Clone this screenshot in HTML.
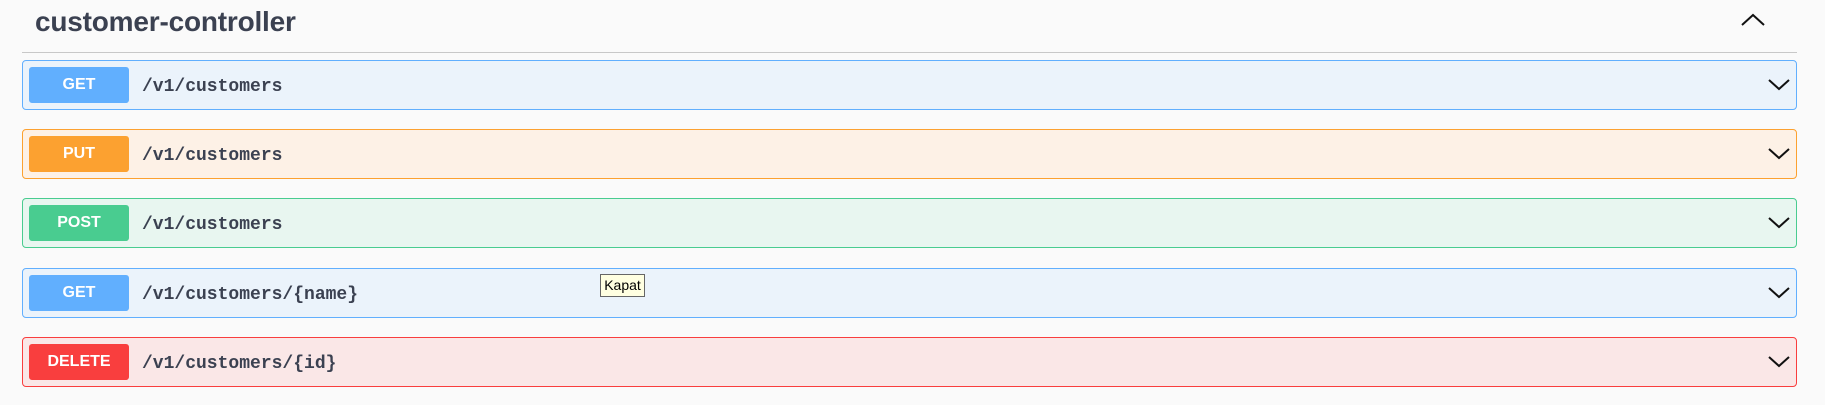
<!DOCTYPE html>
<html><head><meta charset="utf-8"><style>
html,body{margin:0;padding:0;background:#fafafa;width:1825px;height:405px;overflow:hidden;}
body{position:relative;font-family:"Liberation Sans",Arial,sans-serif;}
.title{position:absolute;left:35px;top:6px;font-size:28px;font-weight:bold;color:#3b4151;letter-spacing:-0.2px;}
.hr{position:absolute;left:22px;top:52px;width:1775px;height:1px;background:#c8c8c8;}
.blk{position:absolute;left:22px;width:1773px;height:48px;border:1px solid;border-radius:4px;}
.btn{position:absolute;left:6px;top:6px;width:100px;height:36px;border-radius:3px;color:#fff;font-weight:bold;font-size:16px;text-align:center;line-height:36px;}
.path{position:absolute;left:119px;top:14px;font-family:"Liberation Mono",monospace;font-weight:bold;font-size:18px;color:#3b4151;line-height:24px;}
.chev{position:absolute;left:1745px;top:18px;}
.get{background:#ebf3fb;border-color:#61affe;}.get .btn{background:#61affe;}
.put{background:#fdf1e6;border-color:#fca130;}.put .btn{background:#fca130;}
.post{background:#e8f6f0;border-color:#49cc90;}.post .btn{background:#49cc90;}
.del{background:#fae7e7;border-color:#f93e3e;}.del .btn{background:#f93e3e;}
.tip{position:absolute;left:600px;top:274px;width:43px;height:21px;border:1px solid #666;background:#ffffe1;font-size:14px;line-height:21px;text-align:center;color:#000;}
</style></head><body>
<div class="title">customer-controller</div>
<svg style="position:absolute;left:1741px;top:13px" width="24" height="14"><path d="M1 12 L12 2 L23 12" fill="none" stroke="#111" stroke-width="2"/></svg>
<div class="hr"></div>

<div class="blk get" style="top:60px"><div class="btn">GET</div><div class="path">/v1/customers</div><svg class="chev" width="22" height="12"><path d="M1 1 L11 10 L21 1" fill="none" stroke="#111" stroke-width="2"/></svg></div>
<div class="blk put" style="top:129px"><div class="btn">PUT</div><div class="path">/v1/customers</div><svg class="chev" width="22" height="12"><path d="M1 1 L11 10 L21 1" fill="none" stroke="#111" stroke-width="2"/></svg></div>
<div class="blk post" style="top:198px"><div class="btn">POST</div><div class="path">/v1/customers</div><svg class="chev" width="22" height="12"><path d="M1 1 L11 10 L21 1" fill="none" stroke="#111" stroke-width="2"/></svg></div>
<div class="blk get" style="top:268px"><div class="btn">GET</div><div class="path">/v1/customers/{name}</div><svg class="chev" width="22" height="12"><path d="M1 1 L11 10 L21 1" fill="none" stroke="#111" stroke-width="2"/></svg></div>
<div class="blk del" style="top:337px"><div class="btn">DELETE</div><div class="path">/v1/customers/{id}</div><svg class="chev" width="22" height="12"><path d="M1 1 L11 10 L21 1" fill="none" stroke="#111" stroke-width="2"/></svg></div>

<div class="tip">Kapat</div>
</body></html>
